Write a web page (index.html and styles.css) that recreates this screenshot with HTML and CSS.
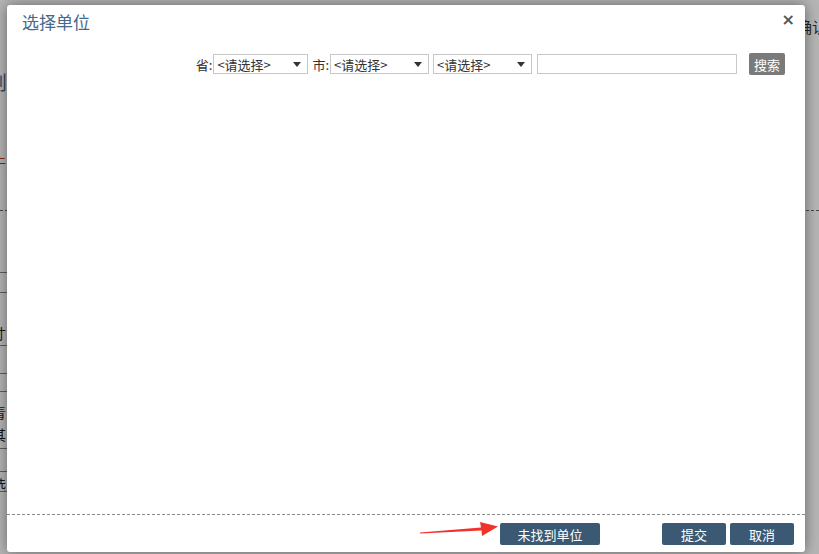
FILE: index.html
```html
<!DOCTYPE html>
<html lang="zh-CN">
<head>
    <meta charset="UTF-8">
    <title>选择单位</title>
    <link rel="stylesheet" href="styles.css">
</head>
<body>

    <!-- Seite hinter dem Dialog -->
    <div class="backpage">
        <span class="bg-title">则</span>
        <span class="bg-red">牛</span>
        <div class="bg-dash"></div>
        <div class="bg-line l1"></div>
        <div class="bg-line l2"></div>
        <span class="bg-text t1">寸</span>
        <div class="bg-line l3"></div>
        <div class="bg-line l4"></div>
        <div class="bg-line l5"></div>
        <span class="bg-text t2">青</span>
        <span class="bg-text t3">其</span>
        <div class="bg-line l6"></div>
        <div class="bg-line l7"></div>
        <span class="bg-text t4">选</span>
        <div class="bg-line l8"></div>
        <span class="bg-confirm">确认</span>
    </div>
    <div class="mask"></div>

    <div class="dialog">
        <div class="dialog-head">
            <span class="dialog-title">选择单位</span>
            <span class="dialog-close">&times;</span>
        </div>

        <div class="toolbar">
            <label>省:</label>
            <div class="select first"><span>&lt;请选择&gt;</span><i class="caret"></i></div>
            <label>市:</label>
            <div class="select"><span>&lt;请选择&gt;</span><i class="caret"></i></div>
            <div class="select"><span>&lt;请选择&gt;</span><i class="caret"></i></div>
            <input class="keyword" type="text">
            <button class="btn-search">搜索</button>
        </div>

        <div class="dialog-body"></div>

        <div class="dialog-foot">
            <button class="btn btn-wide">未找到单位</button>
            <div class="foot-right">
                <button class="btn">提交</button>
                <button class="btn">取消</button>
            </div>
        </div>

        <svg class="arrow" width="84" height="22" viewBox="0 0 84 22">
            <path d="M2 14.5 L63 9.5 L62 4 L80 8.5 L64 18 L63.5 12.5 L2 15.5 Z" fill="#f0322c"/>
        </svg>
    </div>

</body>
</html>
```

FILE: styles.css
```css
body {
    margin: 0;
    padding: 0;
    width: 819px;
    height: 554px;
    overflow: hidden;
    background-color: #fff;
    font-family: "Microsoft YaHei", "Noto Sans CJK SC", "Liberation Sans", sans-serif;
    font-size: 13px;
    color: #333;
}
.backpage {
    position: absolute;
    left: 0;
    top: 0;
    width: 819px;
    height: 554px;
    background-color: #fff;
}
.bg-title {
    position: absolute;
    left: -12px;
    top: 68px;
    font-size: 19px;
    color: #3f6a90;
}
.bg-red {
    position: absolute;
    left: -8px;
    top: 151px;
    font-size: 14px;
    color: #b7370f;
}
.bg-dash {
    position: absolute;
    left: 0;
    right: 0;
    top: 210px;
    border-top: 1px dashed #666;
}
.bg-line {
    position: absolute;
    left: 0;
    width: 12px;
    border-top: 1px solid #888;
}
.l1 { top: 272px; }
.l2 { top: 292px; }
.l3 { top: 345px; }
.l4 { top: 373px; }
.l5 { top: 391px; }
.l6 { top: 448px; }
.l7 { top: 471px; }
.l8 { top: 491px; }
.bg-text {
    position: absolute;
    left: -8px;
    font-size: 14px;
    color: #222;
}
.t1 { top: 323px; }
.t2 { top: 402px; }
.t3 { top: 424px; }
.t4 { top: 474px; }
.bg-confirm {
    position: absolute;
    left: 797px;
    top: 16px;
    font-size: 15px;
    color: #333;
    white-space: nowrap;
}
.mask {
    position: absolute;
    left: 0;
    top: 0;
    width: 819px;
    height: 554px;
    background-color: rgba(0, 0, 0, 0.29);
}

/* Dialog */
.dialog {
    position: absolute;
    left: 7px;
    top: 5px;
    width: 798px;
    height: 547px;
    background-color: #fff;
    border-radius: 3px;
    box-shadow: 0 0 14px rgba(0, 0, 0, 0.45);
    display: flex;
    flex-direction: column;
}
.dialog-head {
    display: flex;
    justify-content: space-between;
    align-items: center;
    padding: 1px 10px 0 15px;
    height: 30px;
}
.dialog-title {
    font-size: 17px;
    color: #44698c;
}
.dialog-close {
    font-family: "DejaVu Sans", sans-serif;
    font-size: 16px;
    font-weight: bold;
    color: #555;
    margin-top: -4px;
}
.toolbar {
    display: flex;
    justify-content: flex-end;
    align-items: center;
    padding: 17px 20px 0 0;
    height: 22px;
}
.toolbar label {
    font-size: 13px;
    color: #333;
    margin-right: 1px;
}
.select {
    box-sizing: border-box;
    width: 99px;
    height: 20px;
    border: 1px solid #c8c8c8;
    display: flex;
    align-items: center;
    justify-content: space-between;
    padding: 0 6px 0 3px;
    margin-right: 4px;
    font-size: 13px;
    color: #333;
}
.select.first {
    width: 95px;
}
.caret {
    width: 0;
    height: 0;
    border-left: 4px solid transparent;
    border-right: 4px solid transparent;
    border-top: 5px solid #333;
}
.keyword {
    box-sizing: border-box;
    width: 200px;
    height: 20px;
    border: 1px solid #c8c8c8;
    margin: 0 12px 0 1px;
    padding: 0;
}
.btn-search {
    width: 36px;
    height: 22px;
    border: none;
    border-radius: 2px;
    background-color: #7a7a7a;
    color: #fff;
    font-family: inherit;
    font-size: 13px;
    padding: 0;
}
.dialog-body {
    flex: 1;
}
.dialog-foot {
    border-top: 1px dashed #8a8a8a;
    height: 38px;
    display: flex;
    align-items: flex-start;
    padding: 8px 11px 0 493px;
    box-sizing: border-box;
}
.foot-right {
    margin-left: auto;
    display: flex;
    gap: 4px;
}
.btn {
    width: 64px;
    height: 22px;
    border: none;
    border-radius: 2px;
    background-color: #3b5972;
    color: #fff;
    font-family: inherit;
    font-size: 13px;
    padding: 0;
}
.btn-wide {
    width: 100px;
}
.arrow {
    position: absolute;
    left: 411px;
    top: 513px;
}
```
